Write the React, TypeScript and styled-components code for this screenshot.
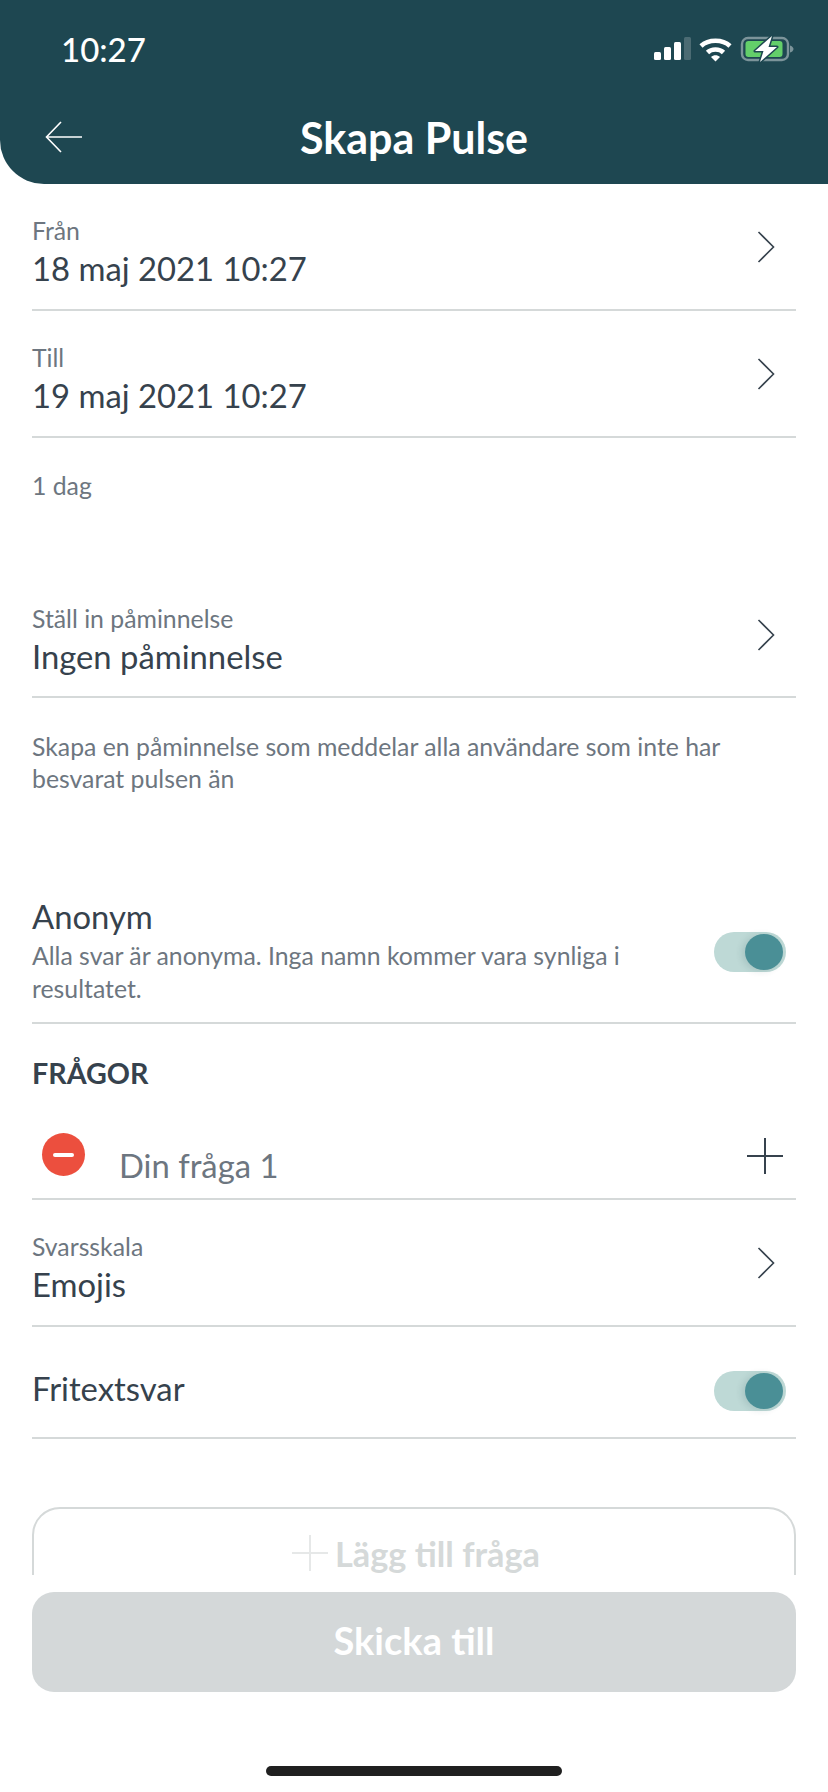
import React from 'react';
import styled, {createGlobalStyle} from 'styled-components';

const GlobalStyle = createGlobalStyle`
  html, body {
    margin: 0;
    padding: 0;
    background: #fff;
  }

  * {
    box-sizing: border-box;
  }
`

const Page = styled.div`
  width: 828px;
  height: 1792px;
  overflow: hidden;
  display: flex;
  flex-direction: column;
  background: #fff;
  font-family: "Lato", "Noto Sans", sans-serif;
  color: #36424d;
`

const Header = styled.header`
  height: 184px;
  flex: none;
  background: #1e4751;
  border-bottom-left-radius: 44px;
  color: #fff;
  display: flex;
  flex-direction: column;
`

const StatusBar = styled.div`
  height: 98px;
  padding: 0 34px 0 61px;
  display: flex;
  justify-content: space-between;
  align-items: center;
`

const Clock = styled.span`
  font-size: 33px;
  font-weight: 500;
`

const StatusIcons = styled.div`
  display: flex;
  align-items: center;
  gap: 8px;
`

const NavBar = styled.div`
  position: relative;
  height: 46px;
  margin-top: 16px;
  display: flex;
  justify-content: center;
  align-items: center;
`

const BackButton = styled.div`
  position: absolute;
  left: 45px;
  top: 0;
  height: 46px;
  display: flex;
  align-items: center;
`

const Title = styled.h1`
  margin: 0;
  font-size: 43px;
  font-weight: 700;
`

const Scroll = styled.div`
  height: 1391px;
  flex: none;
  overflow: hidden;
  padding: 0 32px;
`

const Row = styled.div<{ $height: number }>`
  height: ${props => props.$height}px;
  border-bottom: 2px solid #d5d9d9;
  display: flex;
  justify-content: space-between;
  align-items: center;
`

const RowText = styled.div<{ $shift: number }>`
  display: flex;
  flex-direction: column;
  gap: 5px;
  margin-top: ${props => props.$shift}px;
`

const Label = styled.div`
  font-size: 24.8px;
  line-height: 28px;
  color: #6d7680;
`

const Value = styled.div`
  font-size: 32.8px;
  line-height: 38px;
  color: #36424d;
`

const Chevron = styled.div`
  width: 40px;
  display: flex;
  justify-content: flex-end;
  padding-right: 21px;
`

const Hint = styled.p<{ $height: number; $pad: number }>`
  margin: 0;
  height: ${props => props.$height}px;
  padding-top: ${props => props.$pad}px;
  font-size: 24.8px;
  line-height: 32px;
  color: #6d7680;
`

const ToggleText = styled.div`
  width: 620px;
  margin-top: 16px;
`

const PlainValue = styled(Value)`
  margin-top: 14px;
`

const Description = styled.div`
  margin-top: 3px;
  font-size: 24.8px;
  line-height: 33px;
  color: #6d7680;
`

const Track = styled.div`
  width: 72px;
  height: 40px;
  flex: none;
  margin: 17px 10px 0 0;
  border-radius: 20px;
  background: #bed9d6;
  display: flex;
  justify-content: flex-end;
  align-items: center;
  padding-right: 3px;
`

const Knob = styled.div`
  width: 38px;
  height: 36px;
  border-radius: 50%;
  background: #4a8f96;
  box-shadow: -3px 1px 7px rgba(30, 71, 81, 0.14);
`

const SectionTitle = styled.h2`
  margin: 0;
  height: 76px;
  padding-top: 32px;
  font-size: 28.7px;
  line-height: 34px;
  font-weight: 700;
  color: #36424d;
`

const QuestionRow = styled(Row)`
  align-items: flex-start;
`

const RemoveButton = styled.div`
  width: 43px;
  height: 43px;
  flex: none;
  margin: 33px 0 0 10px;
  border-radius: 50%;
  background: #ec4f3e;
  display: flex;
  justify-content: center;
  align-items: center;

  &::after {
    content: "";
    width: 21px;
    height: 4px;
    border-radius: 2px;
    background: #fff;
  }
`

const QuestionInput = styled.div`
  flex: 1;
  margin: 47px 0 0 34px;
  font-size: 32.8px;
  line-height: 38px;
  color: #6d7680;
`

const PlusIcon = styled.div`
  margin: 38px 13px 0 0;
  display: flex;
`

const AddButton = styled.div`
  margin-top: 68px;
  height: 100px;
  border: 2px solid #d5d9d9;
  border-radius: 28px;
  padding: 0 0 8px 4px;
  display: flex;
  justify-content: center;
  align-items: center;
  gap: 7px;
  font-size: 34.3px;
  font-weight: 700;
  color: #d5d9d9;
`

const Footer = styled.div`
  flex: 1;
  padding: 17px 32px 0;
  display: flex;
  flex-direction: column;
  align-items: center;
`

const SubmitButton = styled.div`
  width: 100%;
  height: 100px;
  border-radius: 22px;
  padding-bottom: 4px;
  background: #d4d8d9;
  color: #fff;
  font-size: 38px;
  font-weight: 700;
  display: flex;
  justify-content: center;
  align-items: center;
`

const HomeBar = styled.div`
  width: 296px;
  height: 10px;
  margin-top: 74px;
  border-radius: 5px;
  background: #202020;
`

const ChevronIcon = () => (
    <svg width="18" height="32" viewBox="0 0 18 32" fill="none" stroke="#36424d" strokeWidth="1.6">
        <path d="M1.5 1 L16.5 16 L1.5 31"/>
    </svg>
);

const NavRow = ({label, value, height, shift}: { label: string, value: string, height: number, shift: number }) => (
    <Row $height={height}>
        <RowText $shift={shift}>
            <Label>{label}</Label>
            <Value>{value}</Value>
        </RowText>
        <Chevron><ChevronIcon/></Chevron>
    </Row>
);

const Toggle = () => (
    <Track><Knob/></Track>
);

const App = () => {
    return (
        <Page>
            <GlobalStyle/>
            <Header>
                <StatusBar>
                    <Clock>10:27</Clock>
                    <StatusIcons>
                        <svg width="37" height="24" viewBox="0 0 37 24">
                            <rect x="0" y="15" width="7" height="8" rx="1.5" fill="#fff"/>
                            <rect x="10" y="10" width="7" height="13" rx="1.5" fill="#fff"/>
                            <rect x="20" y="5" width="7" height="18" rx="1.5" fill="#fff"/>
                            <rect x="30" y="0" width="7" height="23" rx="1.5" fill="#fff" opacity="0.2"/>
                        </svg>
                        <svg width="33" height="25" viewBox="0 0 33 25" fill="none" stroke="#fff" strokeWidth="4.6">
                            <path d="M2 9 C9.5 2 23.5 2 31 9"/>
                            <path d="M8.5 15.5 C12.5 11.5 20.5 11.5 24.5 15.5"/>
                            <path d="M12 20 L16.5 24.5 L21 20 C18.5 17.5 14.5 17.5 12 20 Z" fill="#fff" stroke="none"/>
                        </svg>
                        <svg width="54" height="30" viewBox="0 0 54 30">
                            <rect x="2" y="4" width="46" height="22" rx="6" fill="none" stroke="#fff" strokeOpacity="0.42" strokeWidth="2.4"/>
                            <rect x="5.5" y="7" width="37" height="16" rx="3" fill="#63cf6a"/>
                            <path d="M50 11.5 C52 12 53.5 13.5 53.5 15 C53.5 16.5 52 18 50 18.5 Z" fill="#fff" fillOpacity="0.42"/>
                            <path d="M32 2 L15 17 L23.5 17 L20 28 L37 13 L28.5 13 Z" fill="#fff" stroke="#1e4751" strokeWidth="3" strokeLinejoin="round" paintOrder="stroke"/>
                        </svg>
                    </StatusIcons>
                </StatusBar>
                <NavBar>
                    <BackButton>
                        <svg width="38" height="32" viewBox="0 0 38 32" fill="none" stroke="#fff" strokeWidth="1.6">
                            <path d="M37 16 L2 16"/>
                            <path d="M16 1 L1.5 16 L16 31"/>
                        </svg>
                    </BackButton>
                    <Title>Skapa Pulse</Title>
                </NavBar>
            </Header>
            <Scroll>
                <NavRow label="Från" value="18 maj 2021 10:27" height={127} shift={12}/>
                <NavRow label="Till" value="19 maj 2021 10:27" height={127} shift={12}/>
                <Hint $height={135} $pad={32}>1 dag</Hint>
                <NavRow label="Ställ in påminnelse" value="Ingen påminnelse" height={125} shift={11}/>
                <Hint $height={166} $pad={33}>
                    Skapa en påminnelse som meddelar alla användare som inte har<br/>besvarat pulsen än
                </Hint>
                <Row $height={160}>
                    <ToggleText>
                        <Value>Anonym</Value>
                        <Description>Alla svar är anonyma. Inga namn kommer vara synliga i resultatet.</Description>
                    </ToggleText>
                    <Toggle/>
                </Row>
                <SectionTitle>FRÅGOR</SectionTitle>
                <QuestionRow $height={100}>
                    <RemoveButton/>
                    <QuestionInput>Din fråga 1</QuestionInput>
                    <PlusIcon>
                        <svg width="36" height="36" viewBox="0 0 36 36" stroke="#36424d" strokeWidth="2">
                            <path d="M18 0 V36 M0 18 H36"/>
                        </svg>
                    </PlusIcon>
                </QuestionRow>
                <NavRow label="Svarsskala" value="Emojis" height={127} shift={12}/>
                <Row $height={112}>
                    <PlainValue>Fritextsvar</PlainValue>
                    <Toggle/>
                </Row>
                <AddButton>
                    <svg width="36" height="36" viewBox="0 0 36 36" stroke="#e6e8e8" strokeWidth="2">
                        <path d="M18 0 V36 M0 18 H36"/>
                    </svg>
                    Lägg till fråga
                </AddButton>
            </Scroll>
            <Footer>
                <SubmitButton>Skicka till</SubmitButton>
                <HomeBar/>
            </Footer>
        </Page>
    );
};

export default App;
